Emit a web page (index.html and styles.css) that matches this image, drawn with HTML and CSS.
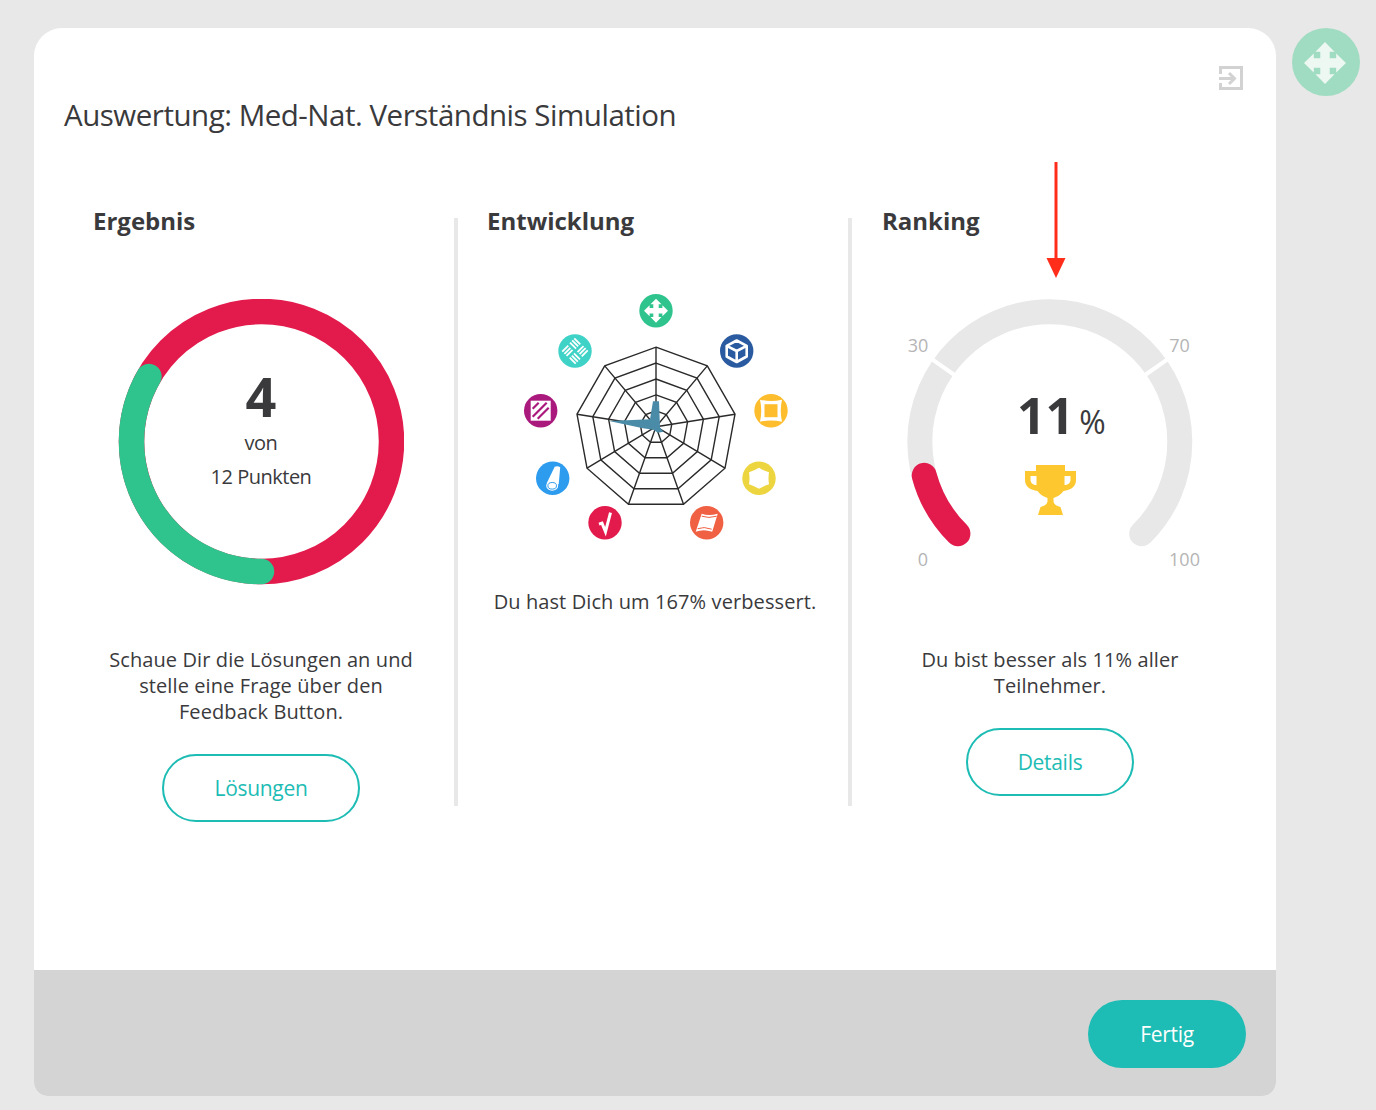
FILE: index.html
```html
<!DOCTYPE html>
<html lang="de">
<head>
    <meta charset="UTF-8">
    <title>Auswertung</title>
    <link rel="stylesheet" href="styles.css">
</head>
<body>
    <div class="card">
        <div class="header">
            <h1 class="title">Auswertung: Med-Nat. Verständnis Simulation</h1>
            <svg class="exit" viewBox="0 0 24 24">
                <path d="M1.5 8V1.5H22.5V22.5H1.5V17M0 12.5H15M10 7L15.5 12.5L10 18"/>
            </svg>
        </div>

        <div class="columns">
            <div class="col">
                <h2>Ergebnis</h2>
                <div class="donut">
                    <svg class="chart" viewBox="0 0 286 286">
                        <circle class="donut-bg" cx="143.5" cy="142.5" r="130"/>
                        <path class="donut-val" d="M143.5 272.5A130 130 0 0 1 30.9 77.5"/>
                    </svg>
                    <div class="donut-text">
                        <div class="donut-num">4</div>
                        <div class="donut-von">von</div>
                        <div class="donut-von">12 Punkten</div>
                    </div>
                </div>
                <p class="text">Schaue Dir die Lösungen an und<br>stelle eine Frage über den<br>Feedback Button.</p>
                <a class="btn btn-wide">Lösungen</a>
            </div>

            <div class="col">
                <h2>Entwicklung</h2>
                <svg class="radar" viewBox="-146 -134.7 290 250">
                    <defs>
                        <polygon id="ring" class="ring" points="0,-79.5 51.3,-60.8 79,-12.5 69,41.5 27.5,77.5 -27.5,77.5 -69,41.5 -79,-12.5 -51.3,-60.8"/>
                        <path id="move" d="M0-12L5.5-6.4H2.7V-2.7H6.4V-5.5L12 0L6.4 5.5V2.7H2.7V6.4H5.5L0 12L-5.5 6.4H-2.7V2.7H-6.4V5.5L-12 0L-6.4-5.5V-2.7H-2.7V-6.4H-5.5Z"/>
                    </defs>
                    <g class="web">
                        <use href="#ring"/>
                        <use href="#ring" transform="scale(.8)"/>
                        <use href="#ring" transform="scale(.6)"/>
                        <use href="#ring" transform="scale(.4)"/>
                        <use href="#ring" transform="scale(.2)"/>
                        <path d="M0 0L0-79.5M0 0L51.3-60.8M0 0L79-12.5M0 0L69 41.5M0 0L27.5 77.5M0 0L-27.5 77.5M0 0L-69 41.5M0 0L-79-12.5M0 0L-51.3-60.8"/>
                    </g>
                    <polygon class="data" points="-3,-25.5 3,-25.5 4,0.7 7.5,5 2,6 -2.7,3 -13,1.5 -47,-5.7 -6,-7.5"/>

                    <g transform="translate(0,-116)">
                        <circle r="16.7" fill="#2fc48d"/>
                        <use href="#move" fill="#fff"/>
                    </g>
                    <g transform="translate(80.7,-75.7)">
                        <circle r="16.7" fill="#2a5aa0"/>
                        <path class="line" d="M0-10.5L10-5.2V5.5L0 11L-10 5.5V-5.2ZM-10-5.2L0 0L10-5.2M0 0V11"/>
                    </g>
                    <g transform="translate(115,-16)">
                        <circle r="16.7" fill="#fdbd2c"/>
                        <path fill="#fff" d="M-11-11Q0-8.5 11-11Q8.5 0 11 11Q0 8.5-11 11Q-8.5 0-11-11Z"/>
                        <rect x="-6.5" y="-6.5" width="13" height="13" fill="#fdbd2c"/>
                    </g>
                    <g transform="translate(103,51.6)">
                        <circle r="16.7" fill="#ecd53f"/>
                        <path fill="#fff" d="M0-10.5Q5-7.5 10-6Q9 0 10 6Q5 7.5 0 10.5Q-5 7.5-10 6Q-9 0-10-6Q-5-7.5 0-10.5Z"/>
                    </g>
                    <g transform="translate(50.7,96)">
                        <circle r="16.7" fill="#f06043"/>
                        <path fill="#fff" d="M-5-9Q2-6.5 11-9L5.5 9Q-3 6-11 9Z"/>
                        <path class="thin" stroke="#f06043" d="M-5-6.5Q2-4 10-6.5M-9 6Q-3 3.5 5 6.5"/>
                    </g>
                    <g transform="translate(-51,96)">
                        <circle r="16.7" fill="#e31b4c"/>
                        <path class="check" d="M-6 1.5L-3 .5L.5 9L5.5-10"/>
                    </g>
                    <g transform="translate(-103.3,51.6)">
                        <circle r="16.7" fill="#2d9cef"/>
                        <path fill="#fff" d="M2-11.5Q5-12.8 7.5-11L6 6L-6 5Z"/>
                        <ellipse cx="-.5" cy="7.5" rx="6" ry="5" fill="#fff"/>
                        <ellipse class="thin" stroke="#2d9cef" cx="-.5" cy="7.5" rx="4.3" ry="3.3" fill="none"/>
                    </g>
                    <g transform="translate(-115.3,-16)">
                        <circle r="16.7" fill="#aa1a7c"/>
                        <rect x="-10" y="-10" width="20" height="20" fill="#fff"/>
                        <path class="stripes" d="M-8-2L-2-8M-8 6L6-8M-3 8L8-3"/>
                    </g>
                    <g transform="translate(-81,-75.7)">
                        <circle r="16.7" fill="#3fd2c7"/>
                        <g class="weave" transform="rotate(45)">
                            <path d="M-9.5-8.5H-1M-9.5-5.5H-1M-9.5-2.5H-1"/>
                            <path d="M2.5-9.5V-1M5.5-9.5V-1M8.5-9.5V-1"/>
                            <path d="M1 2.5H9.5M1 5.5H9.5M1 8.5H9.5"/>
                            <path d="M-8.5 1V9.5M-5.5 1V9.5M-2.5 1V9.5"/>
                        </g>
                    </g>
                </svg>
                <p class="text">Du hast Dich um 167% verbessert.</p>
            </div>

            <div class="col">
                <h2>Ranking</h2>
                <svg class="gauge" viewBox="0 0 320 286">
                    <g transform="translate(159.8,142.8)">
                        <path class="gauge-bg" d="M-91.9 91.9A130 130 0 1 1 91.9 91.9"/>
                        <path class="gauge-gap" d="M-91.7-64.3L-121.2-84.9M91.7-64.3L121.2-84.9"/>
                        <path class="gauge-val" d="M-91.9 91.9A130 130 0 0 1-125.6 33.6"/>
                    </g>
                    <text class="tick" x="28" y="53">30</text>
                    <text class="tick" x="289.5" y="53">70</text>
                    <text class="tick" x="33" y="267">0</text>
                    <text class="tick" x="294.5" y="267">100</text>
                    <text class="pct" x="127" y="134.5">11<tspan class="pct-sign" dx="5">%</tspan></text>
                    <path transform="translate(160.5,191)" fill="#fdc82f" fill-rule="evenodd" d="M-14.5-25H14.5V-19H25.5V-10C25.5-3 20 0 13 1C10 5 6 7 3 8V11C3 14 6 16 10 17L12.5 25H-12.5L-10 17C-6 16-3 14-3 11V8C-6 7-10 5-13 1C-20 0-25.5-3-25.5-10V-19H-14.5ZM-20-14V-10C-20-7-17-5-14-5V-14ZM20-14V-10C20-7 17-5 14-5V-14Z"/>
                </svg>
                <p class="text">Du bist besser als 11% aller<br>Teilnehmer.</p>
                <a class="btn">Details</a>
            </div>
        </div>

        <div class="footer">
            <a class="btn-done">Fertig</a>
        </div>
    </div>

    <!-- drag handle next to the card -->
    <div class="handle">
        <svg viewBox="-33 -35 68 68">
            <path fill="#eef8f3" d="M0-21L9.5-11.2H4.7V-4.7H11.2V-9.5L21 0L11.2 9.5V4.7H4.7V11.2H9.5L0 21L-9.5 11.2H-4.7V4.7H-11.2V9.5L-21 0L-11.2-9.5V-4.7H-4.7V-11.2H-9.5Z"/>
        </svg>
    </div>

    <!-- red marker arrow -->
    <svg class="marker" viewBox="0 0 24 120">
        <path d="M12 2V100" stroke="#ff2d1a" stroke-width="3"/>
        <path d="M2.5 98H21.5L12 118Z" fill="#ff2d1a"/>
    </svg>
</body>
</html>
```

FILE: styles.css
```css
html, body {
    margin: 0;
    height: 1110px;
    overflow: hidden;
}
body {
    position: relative;
    box-sizing: border-box;
    padding: 28px 0 14px 34px;
    background: #e8e8e8;
    font-family: "Open Sans", "Liberation Sans", sans-serif;
    color: #3a3a3c;
}
.card {
    display: flex;
    flex-direction: column;
    width: 1242px;
    height: 1068px;
    background: #fff;
    border-radius: 28px 28px 14px 14px;
    overflow: hidden;
}
.header {
    display: flex;
    justify-content: space-between;
    align-items: flex-start;
    padding: 38px 33px 0 30px;
}
.title {
    margin: 29px 0 0;
    font-size: 29.5px;
    font-weight: 400;
    line-height: 40px;
    letter-spacing: -0.48px;
}
.exit {
    width: 24px;
    height: 24px;
    fill: none;
    stroke: #d2d2d2;
    stroke-width: 3;
}
.columns {
    display: grid;
    grid-template-columns: repeat(3, 394px);
    grid-template-rows: 588px;
    margin: 83px 0 0 30px;
}
.col {
    position: relative;
    display: flex;
    flex-direction: column;
    align-items: center;
}
.col:not(:last-child)::after {
    content: "";
    position: absolute;
    top: 0;
    right: 0;
    bottom: 0;
    width: 4px;
    background: #e8e8e8;
}
.col:last-child {
    padding-left: 2px;
}
.col h2 {
    align-self: flex-start;
    margin: -12px 0 63px 29px;
    font-size: 24px;
    font-weight: 700;
    line-height: 30px;
}
.col:last-child h2 {
    margin-left: 28px;
}
.text {
    margin: 62px 0 0;
    font-size: 20px;
    line-height: 26px;
    text-align: center;
    letter-spacing: 0.1px;
}
.donut {
    position: relative;
    flex-shrink: 0;
    width: 286px;
    height: 286px;
}
.chart {
    display: block;
    width: 286px;
    height: 286px;
}
.donut-bg, .donut-val {
    fill: none;
    stroke-width: 25.5;
}
.donut-bg {
    stroke: #e31b4c;
}
.donut-val {
    stroke: #2fc48d;
    stroke-linecap: round;
}
.donut-text {
    position: absolute;
    inset: 0;
    display: flex;
    flex-direction: column;
    align-items: center;
    padding-top: 69px;
    box-sizing: border-box;
}
.donut-num {
    margin-bottom: 2px;
    font-size: 54px;
    font-weight: 700;
    line-height: 56px;
}
.donut-von {
    font-size: 20px;
    line-height: 34px;
    letter-spacing: -0.5px;
}
.btn {
    box-sizing: border-box;
    display: flex;
    flex-shrink: 0;
    align-items: center;
    justify-content: center;
    width: 168px;
    height: 68px;
    margin-top: 29px;
    border: 2px solid #1dbcb4;
    border-radius: 34px;
    color: #1dbcb4;
    font-size: 21px;
    letter-spacing: -0.3px;
}
.btn-wide {
    width: 198px;
}
.radar {
    display: block;
    flex-shrink: 0;
    width: 290px;
    height: 250px;
    margin-top: -7px;
    overflow: visible;
}
.radar + .text {
    margin-top: 47px;
}
.ring {
    vector-effect: non-scaling-stroke;
}
.web use, .web path {
    fill: none;
    stroke: #2a2a2a;
    stroke-width: 1.4;
}
.data {
    fill: #4a8ba8;
}
.line {
    fill: none;
    stroke: #fff;
    stroke-width: 2.6;
    stroke-linejoin: round;
}
.thin {
    fill: none;
    stroke-width: 1;
}
.check {
    fill: none;
    stroke: #fff;
    stroke-width: 3;
}
.stripes {
    fill: none;
    stroke: #aa1a7c;
    stroke-width: 2.2;
}
.weave path {
    fill: none;
    stroke: #fff;
    stroke-width: 1.8;
}
.gauge {
    display: block;
    flex-shrink: 0;
    width: 320px;
    height: 286px;
    overflow: visible;
}
.gauge-bg, .gauge-val {
    fill: none;
    stroke-width: 25;
    stroke-linecap: round;
}
.gauge-bg {
    stroke: #e8e8e8;
}
.gauge-val {
    stroke: #e31b4c;
}
.gauge-gap {
    fill: none;
    stroke: #fff;
    stroke-width: 4;
}
.tick {
    fill: #b5b5b5;
    font-size: 18px;
    text-anchor: middle;
}
.pct {
    fill: #3a3a3c;
    font-size: 50px;
    font-weight: 700;
}
.pct-sign {
    font-size: 32px;
    font-weight: 400;
}
.footer {
    box-sizing: border-box;
    display: flex;
    justify-content: flex-end;
    align-items: center;
    height: 126px;
    margin-top: auto;
    padding: 2px 30px 0 0;
    background: #d4d4d4;
}
.btn-done {
    display: flex;
    align-items: center;
    justify-content: center;
    width: 158px;
    height: 68px;
    border-radius: 34px;
    background: #1dbcb4;
    color: #fff;
    font-size: 21px;
    letter-spacing: -0.3px;
}
.handle {
    position: absolute;
    top: 28px;
    left: 1292px;
    width: 68px;
    height: 68px;
    border-radius: 50%;
    background: #a0dcc2;
}
.handle svg {
    display: block;
}
.marker {
    position: absolute;
    top: 160px;
    left: 1044px;
    width: 24px;
    height: 120px;
}
```
